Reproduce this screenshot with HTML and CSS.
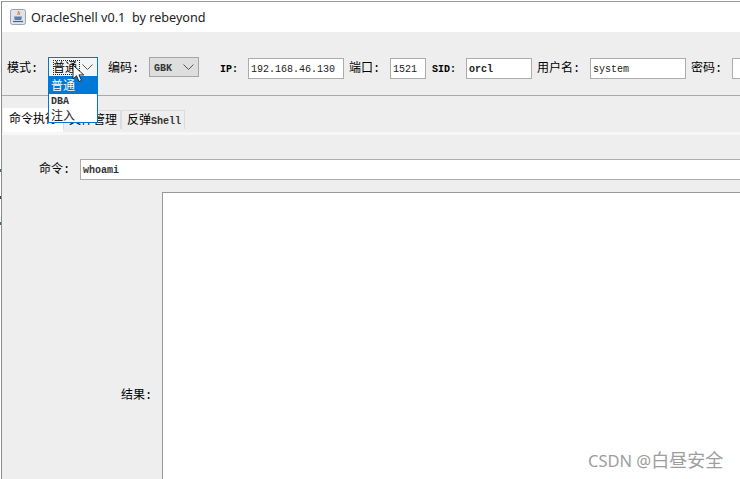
FILE: index.html
```html
<!DOCTYPE html>
<html lang="zh">
<head>
<meta charset="utf-8">
<title>OracleShell</title>
<link rel="stylesheet" href="styles.css">
</head>
<body>
<div class="window">
  <header class="titlebar">
    <svg class="app-icon" width="16" height="16" viewBox="0 0 16 16">
      <rect x="0.5" y="0.5" width="15" height="15" rx="2" fill="#dfe3ea" stroke="#9aa3b0"/>
      <path d="M8 2c1.500 1.500-1 2.500 0 4M9.500 3c.8 1-.8 2 0 3" stroke="#d9772b" fill="none"/>
      <path d="M4 7.500h8l-.8 3.500H4.800z" fill="#5c7fa8"/>
      <path d="M3 12.500h10" stroke="#46668c" stroke-width="1.200"/>
    </svg>
    <span>OracleShell v0.1&nbsp; by rebeyond</span>
  </header>
  <section class="toolbar">
    <span class="label cjk w-mode">模式:</span>
    <div class="combo combo-active">
      <span class="combo-value cjk">普通</span>
      <svg class="chev" width="11" height="6" viewBox="0 0 11 6"><path d="M.5.500l5 5 5-5" fill="none" stroke="#555"/></svg>
    </div>
    <span class="label cjk w-enc">编码:</span>
    <div class="combo combo-gray">
      <span class="mono gbk">GBK</span>
      <svg class="chev" width="11" height="6" viewBox="0 0 11 6"><path d="M.5.500l5 5 5-5" fill="none" stroke="#555"/></svg>
    </div>
    <span class="label mono w-ip">IP:</span>
    <div class="field w-f-ip mono">192.168.46.130</div>
    <span class="label cjk w-port">端口:</span>
    <div class="field w-f-port mono">1521</div>
    <span class="label mono w-sid">SID:</span>
    <div class="field w-f-sid mono">orcl</div>
    <span class="label cjk w-user">用户名:</span>
    <div class="field w-f-user mono">system</div>
    <span class="label cjk w-pass">密码:</span>
    <div class="field w-f-pass mono"></div>
  </section>
  <nav class="tabs">
    <div class="tab tab-active cjk">命令执行</div>
    <div class="tab tab-two cjk">文件管理</div>
    <div class="tab tab-three cjk">反弹<span class="mono">Shell</span></div>
  </nav>
  <main class="pane">
    <div class="row-cmd">
      <span class="cmd-label cjk">命令:</span>
      <div class="cmd-input mono">whoami</div>
    </div>
    <div class="row-result">
      <span class="result-label cjk">结果:</span>
      <div class="result-box"></div>
    </div>
  </main>
</div>

<i class="speck speck-a"></i>
<i class="speck speck-b"></i>
<i class="speck speck-c"></i>

<ul class="dropdown">
  <li class="opt opt-sel cjk">普通</li>
  <li class="opt mono">DBA</li>
  <li class="opt opt-last cjk">注入</li>
</ul>

<svg class="cursor" width="13" height="19" viewBox="0 0 13 19">
  <path d="M1 1v14l3.500-3.200 2.500 5.700 2.500-1.100-2.500-5.500h4.700z" fill="#fff" stroke="#222" stroke-width="1"/>
</svg>

<div class="watermark">CSDN @<span class="wm-cjk">白昼安全</span></div>
</body>
</html>
```
FILE: styles.css
```css
* { box-sizing: border-box; }
html, body { margin: 0; padding: 0; }
body {
  width: 740px;
  height: 479px;
  overflow: hidden;
  background: #fff;
  position: relative;
  font-family: "Noto Sans CJK SC", sans-serif;
  color: #000;
}
.cjk { font-family: "Liberation Mono", "Noto Sans CJK SC", sans-serif; font-size: 12px; color: #000; }
.mono { font-family: "Liberation Mono", monospace; font-size: 10px; }

.window {
  margin: 1px 0 0 1px;
  width: 739px;
  height: 478px;
  border-left: 1px solid #8c8c8c;
  border-top: 1px solid #9a9a9a;
  display: flex;
  flex-direction: column;
  overflow: hidden;
}
.titlebar {
  height: 30px;
  flex: none;
  background: #fff;
  display: flex;
  align-items: center;
  padding-left: 8px;
  gap: 5px;
  font: 12.650px "Noto Sans", sans-serif;
  color: #222;
}
.app-icon { flex: none; }

.toolbar {
  height: 64px;
  flex: none;
  background: #eee;
  border-bottom: 1px solid #a9a9a9;
  display: flex;
  align-items: flex-start;
  padding: 26px 0 0 5px;
  white-space: nowrap;
}
.label { flex: none; line-height: 16px; margin-top: 3px; }
.w-mode { width: 41px; }
.w-enc { width: 41px; margin-left: 10px; }
.w-ip { width: 28px; margin-left: 21px; margin-top: 4px; font-weight: 700; }
.w-port { width: 41px; margin-left: 5px; }
.w-sid { width: 34px; margin-left: 6px; margin-top: 4px; font-weight: 700; }
.w-user { width: 53px; margin-left: 5px; }
.w-pass { width: 41px; margin-left: 5px; }

.combo {
  flex: none;
  width: 50px;
  height: 20px;
  display: flex;
  align-items: center;
  justify-content: space-between;
  padding: 0 4px;
  margin-top: -1px;
}
.combo-active { border: 1px solid #0078d7; background: #f4f4f4; }
.combo-gray { border: 1px solid #a5a5a5; background: #dedede; }
.combo-value { outline: 1px dotted #222; outline-offset: -1px; height: 15px; line-height: 18px; width: 27px; overflow: hidden; }
.gbk { font-weight: 700; color: #333; padding-top: 2px; }

.field {
  flex: none;
  height: 21px;
  background: #fff;
  border: 1px solid #acacac;
  padding: 0 2px;
  line-height: 21px;
  color: #222;
  overflow: hidden;
}
.w-f-ip { width: 96px; }
.w-f-port { width: 36px; }
.w-f-sid { width: 66px; font-weight: 700; }
.w-f-user { width: 96px; }
.w-f-pass { width: 12px; }

.tabs {
  height: 36px;
  flex: none;
  background: #eee;
  display: flex;
  align-items: flex-end;
  padding: 0 0 3px 1px;
  position: relative;
}
.tab {
  height: 19px;
  line-height: 20px;
  padding: 0 5px;
  background: #eee;
  border: 1px solid #dcdcdc;
  border-bottom: 0;
  white-space: nowrap;
  flex: none;
}
.tab-active {
  width: 60px;
  height: 24px;
  margin-bottom: -3px;
  padding-left: 6px;
  background: #fff;
  border: 0;
  line-height: 24px;
  position: relative;
  z-index: 1;
}
.tab-two { width: 58px; }
.tab-three { width: 64px; }
.tab .mono { font-weight: 700; color: #333; }

.pane {
  flex: 1;
  min-height: 0;
  background: #eee;
  border-top: 3px solid #f7f7f7;
  display: flex;
  flex-direction: column;
  padding-top: 24px;
}
.row-cmd { display: flex; align-items: center; height: 21px; padding-left: 37px; flex: none; margin-right: -4px; }
.cmd-label { width: 41px; flex: none; line-height: 20px; }
.cmd-input {
  flex: 1;
  height: 21px;
  background: #fff;
  border: 1px solid #acacac;
  padding: 0 2px;
  line-height: 21px;
  font-weight: 700;
  color: #333;
}
.row-result { flex: 1; min-height: 0; display: flex; margin-top: 12px; padding-left: 119px; margin-right: -4px; }
.result-label { width: 41px; flex: none; margin-top: 195px; line-height: 18px; }
.result-box { flex: 1; background: #fff; border: 1px solid #999; border-bottom: 0; border-right: 0; }

.speck { position: absolute; left: 0; width: 1px; height: 3px; background: #3f6f78; }
.speck-a { top: 169px; }
.speck-b { top: 196px; background: #444; }
.speck-c { top: 222px; }

.dropdown {
  position: absolute;
  z-index: 5;
  left: 48px;
  top: 76px;
  width: 50px;
  height: 47px;
  margin: 0;
  padding: 0;
  list-style: none;
  background: #fff;
  border: 1px solid #0078d7;
}
.opt { height: 15px; line-height: 15px; padding-left: 2px; color: #222; }
.opt-sel { height: 17px; line-height: 20px; background: #0078d7; color: #fff; }
.opt-last { line-height: 16px; }
.dropdown .mono { font-weight: 700; color: #333; }

.cursor { position: absolute; z-index: 6; left: 72px; top: 64px; }

.watermark {
  position: absolute;
  left: 588px;
  top: 446px;
  font: 16.500px "Noto Sans", sans-serif;
  color: #9e9e9e;
  line-height: 20px;
  white-space: nowrap;
}
.wm-cjk { font: 18px "Noto Sans CJK SC", sans-serif; }
```
